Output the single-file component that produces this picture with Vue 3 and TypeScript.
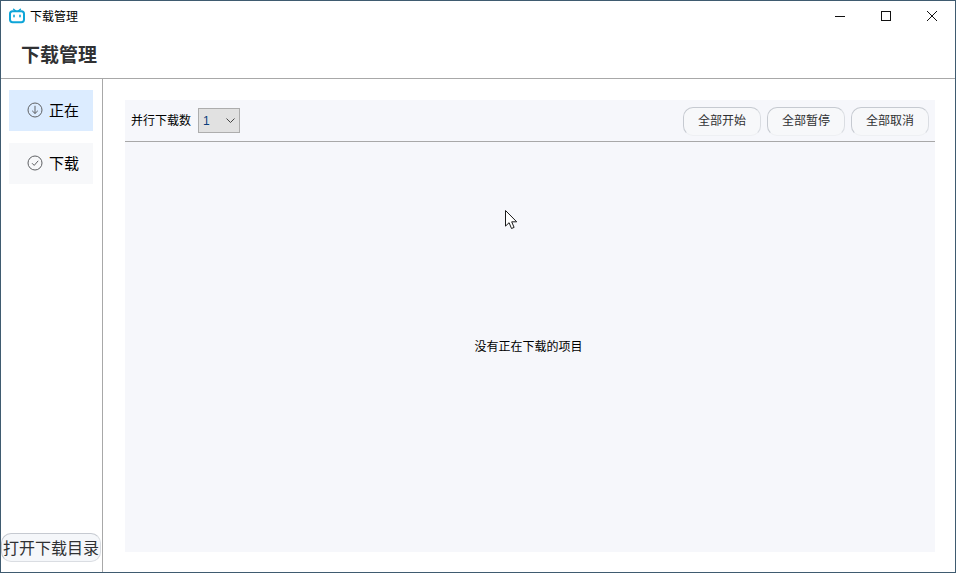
<script setup lang="ts">
const toolbarButtons: string[] = ['全部开始', '全部暂停', '全部取消']
</script>

<template>
  <div class="window">
    <div class="titlebar">
      <svg class="app-icon" viewBox="0 0 16 16" width="16" height="16">
        <path d="M4.6 1.2 6.6 3M11.4 1.2 9.4 3" stroke="#0ea5d8" stroke-width="1.5" stroke-linecap="round" fill="none" />
        <rect x="1" y="3.2" width="14" height="11" rx="2.6" fill="none" stroke="#0ea5d8" stroke-width="2" />
        <path d="M5 7.2v1.6M11 7.2v1.6" stroke="#0ea5d8" stroke-width="1.6" stroke-linecap="round" />
      </svg>
      <span class="app-title">下载管理</span>
      <div class="controls">
        <svg class="ctl" viewBox="0 0 46 29" width="46" height="29"><path d="M18 15.5h10" stroke="#111" fill="none" /></svg>
        <svg class="ctl" viewBox="0 0 46 29" width="46" height="29"><rect x="18.5" y="10.5" width="9" height="9" stroke="#111" fill="none" /></svg>
        <svg class="ctl" viewBox="0 0 46 29" width="46" height="29"><path d="M18 10l10 10M28 10l-10 10" stroke="#111" fill="none" /></svg>
      </div>
    </div>

    <header class="header">下载管理</header>

    <div class="body">
      <aside class="sidebar">
        <nav class="nav">
          <div class="nav-item active">
            <svg viewBox="0 0 16 16" width="16" height="16" class="nav-icon">
              <circle cx="8" cy="8" r="7" fill="none" stroke="#5f6164" />
              <path d="M8 3.8v7.6M5.2 8.8 8 11.5l2.8-2.7" fill="none" stroke="#5f6164" />
            </svg>
            <span class="nav-text">正在</span>
          </div>
          <div class="nav-item">
            <svg viewBox="0 0 16 16" width="16" height="16" class="nav-icon">
              <circle cx="8" cy="8" r="7" fill="none" stroke="#5f6164" />
              <path d="M5 8.2 7.2 10.4 11.2 5.8" fill="none" stroke="#5f6164" />
            </svg>
            <span class="nav-text">下载</span>
          </div>
        </nav>
        <button class="open-btn">打开下载目录</button>
      </aside>

      <main class="main">
        <section class="panel">
          <div class="toolbar">
            <span class="label">并行下载数</span>
            <div class="select">
              <span class="select-value">1</span>
              <svg viewBox="0 0 9 5" width="9" height="5"><path d="M.5.5 4.5 4.5 8.5.5" fill="none" stroke="#444" /></svg>
            </div>
            <div class="actions">
              <button v-for="text in toolbarButtons" :key="text" class="tool-btn">{{ text }}</button>
            </div>
          </div>
          <div class="empty">没有正在下载的项目</div>
        </section>
      </main>
    </div>

    <svg class="cursor" viewBox="0 0 13 20" width="13" height="20">
      <path d="M.5.5v15.6l3.6-3.4 2.4 5.8 2.6-1.1-2.4-5.6h5z" fill="#fff" stroke="#1a1a1a" />
    </svg>
  </div>
</template>

<style scoped>
.window {
  position: relative;
  width: 956px;
  height: 573px;
  box-sizing: border-box;
  border: 1px solid #3f5b70;
  background: #fff;
  display: flex;
  flex-direction: column;
  overflow: hidden;
  font-family: "Liberation Sans", "Noto Sans CJK SC", sans-serif;
  color: #111;
}
.titlebar {
  height: 29px;
  flex: none;
  display: flex;
  align-items: center;
  padding-left: 8px;
}
.app-icon { flex: none; }
.app-title {
  margin-left: 5px;
  font-size: 12px;
  font-family: "Noto Sans CJK SC", sans-serif;
  color: #000;
}
.controls {
  margin-left: auto;
  display: flex;
}
.ctl { display: block; margin-top: -1px; }
.header {
  height: 48px;
  flex: none;
  box-sizing: border-box;
  padding: 0 0 2px 20px;
  display: flex;
  align-items: center;
  font-family: "Noto Sans CJK SC", sans-serif;
  font-size: 19px;
  font-weight: 700;
  color: #303133;
}
.body {
  flex: 1;
  min-height: 0;
  display: flex;
  border-top: 1px solid #a8a8a8;
}
.sidebar {
  width: 102px;
  flex: none;
  box-sizing: border-box;
  border-right: 1px solid #a8a8a8;
  display: flex;
  flex-direction: column;
  justify-content: space-between;
  padding: 11px 0 10px 0;
}
.nav {
  display: flex;
  flex-direction: column;
  gap: 12px;
  padding-left: 8px;
}
.nav-item {
  width: 84px;
  height: 41px;
  box-sizing: border-box;
  padding-left: 4px;
  background: #f7f8fa;
  display: flex;
  align-items: center;
  justify-content: center;
  gap: 6px;
  font-size: 15px;
  font-family: "Noto Sans CJK SC", sans-serif;
  color: #000;
}
.nav-text { margin-bottom: 3px; }
.nav-item.active { background: #dcecff; }
.nav-icon { flex: none; margin-bottom: 1px; }
.open-btn {
  width: 100px;
  height: 29px;
  margin: 0;
  padding: 0 0 1px;
  border: 1px solid #c6cad1;
  border-right-color: #dadde2;
  border-bottom-color: #dadde2;
  border-radius: 10px;
  background: #f5f7fa;
  font-family: "Noto Sans CJK SC", sans-serif;
  font-size: 16px;
  color: #303133;
  white-space: nowrap;
}
.main {
  flex: 1;
  min-width: 0;
  box-sizing: border-box;
  padding: 21px 20px 20px 22px;
  display: flex;
}
.panel {
  flex: 1;
  background: #f6f7fb;
  display: flex;
  flex-direction: column;
}
.toolbar {
  height: 42px;
  flex: none;
  box-sizing: border-box;
  border-bottom: 1px solid #a8a8a8;
  display: flex;
  align-items: center;
  padding: 0 6px;
}
.label {
  font-size: 12px;
  font-family: "Noto Sans CJK SC", sans-serif;
  color: #000;
  margin-bottom: 3px;
}
.select {
  margin-left: 7px;
  width: 42px;
  height: 25px;
  box-sizing: border-box;
  border: 1px solid #adadad;
  background: #e1e1e1;
  display: flex;
  align-items: center;
  justify-content: space-between;
  padding: 0 4px 0 4px;
  font-size: 12px;
  color: #0a3d7c;
}
.select-value { font-family: "Liberation Sans", sans-serif; }
.actions {
  margin-left: auto;
  display: flex;
  gap: 6px;
  margin-top: 1px;
}
.tool-btn {
  width: 78px;
  height: 29px;
  padding: 0 0 3px;
  border: 1px solid #c6cad1;
  border-right-color: #dadde2;
  border-bottom-color: #eef0f3;
  border-radius: 10px;
  background: #f7f8fa;
  font-family: "Noto Sans CJK SC", sans-serif;
  font-size: 12px;
  color: #303133;
}
.empty {
  flex: 1;
  display: flex;
  align-items: center;
  justify-content: center;
  padding: 0 3px 4px 0;
  font-size: 12px;
  font-family: "Noto Sans CJK SC", sans-serif;
  color: #000;
}
.cursor {
  position: absolute;
  left: 504px;
  top: 209px;
}
</style>
